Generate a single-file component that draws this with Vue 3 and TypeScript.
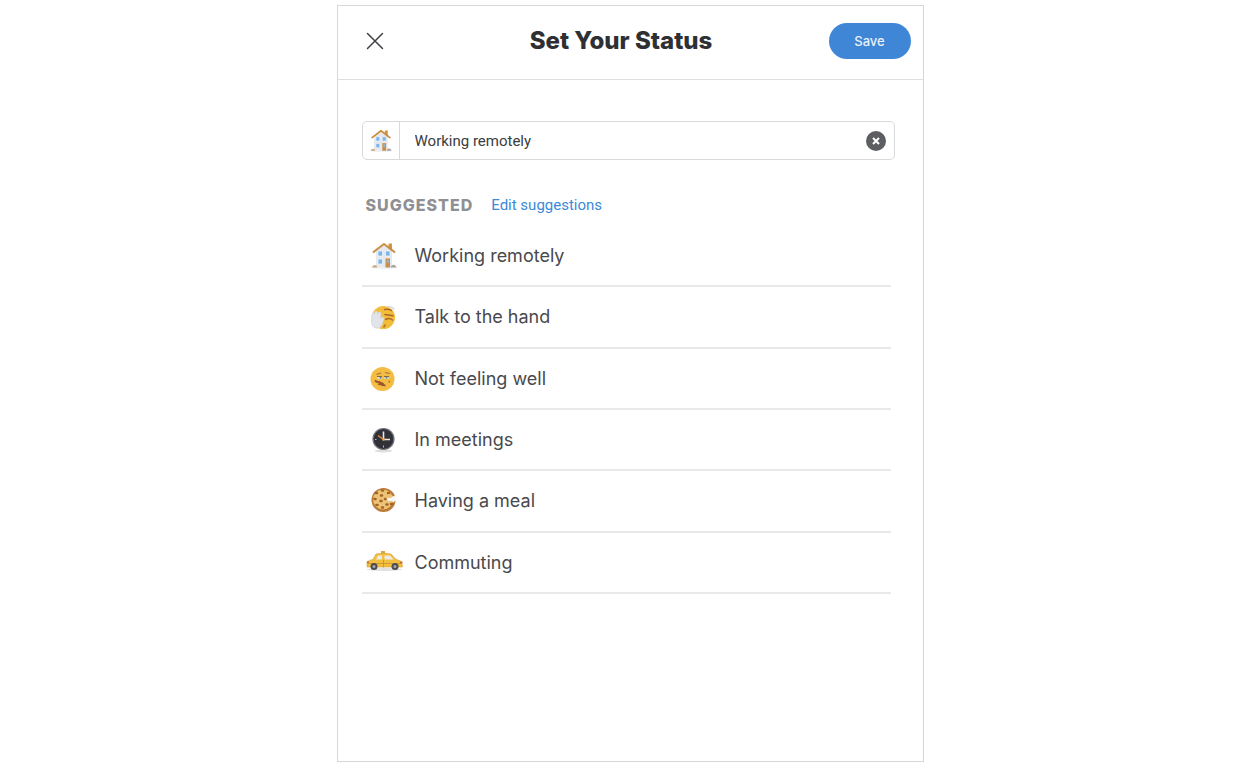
<script setup lang="ts">
import { ref } from 'vue'

type Icon = 'house' | 'hand' | 'woozy' | 'clock' | 'cookie' | 'taxi'
interface Suggestion { icon: Icon; label: string }

const suggestions: Suggestion[] = [
  { icon: 'house', label: 'Working remotely' },
  { icon: 'hand', label: 'Talk to the hand' },
  { icon: 'woozy', label: 'Not feeling well' },
  { icon: 'clock', label: 'In meetings' },
  { icon: 'cookie', label: 'Having a meal' },
  { icon: 'taxi', label: 'Commuting' },
]
const status = ref('Working remotely')
</script>

<template>
  <svg class="defs" aria-hidden="true">
    <symbol id="house" viewBox="0 0 40 28">
      <ellipse cx="20" cy="25.500" rx="13" ry="1.500" fill="#eef0f2" />
      <path d="M12 9 20 3l8 6v16H12z" fill="#e6e8ed" />
      <path d="M24.500 1.500h3.500v8l-3.500-3z" fill="#d3963f" />
      <path d="M9.500 10 20 2l10.500 8" fill="none" stroke="#c98d3d" stroke-width="2" stroke-linecap="round" stroke-linejoin="round" />
      <path d="M14 9h4.500v5H14zM21.500 9H26v5h-4.500zM14 17h4.500v5H14z" fill="#79b5ea" stroke="#f6f8fa" stroke-width=".7" />
      <path d="M21.500 16.500h4.500v9h-4.500z" fill="#c68f4b" />
      <path d="M22.800 18h2v3h-2z" fill="#8dbadc" />
      <path d="M8 25.500q.5-2.500 3-2.500 2 .3 2.200 2.500z" fill="#caa677" />
      <path d="M26.500 25.500q.7-3 3-2.800 2.500.3 3 2.800z" fill="#a9a39f" />
    </symbol>
    <symbol id="hand" viewBox="0 0 40 28">
      <circle cx="19.500" cy="14.500" r="11.500" fill="#f3bd3c" />
      <path d="M20.500 6.500q4-1 7 1M21 11.500l8 1.200M21.500 16.500q4-2 7 .5" fill="none" stroke="#a9672d" stroke-width="1.500" stroke-linecap="round" />
      <path d="M23 3.500q5 0 7.500 3" fill="none" stroke="#d9dadd" stroke-width="1.500" />
      <path d="m19.500 24.500 2-3" fill="none" stroke="#b87830" stroke-width="1.600" />
      <path d="M7.500 16q0-5 1.500-6 1.400-.2 1.500 1l.3-2q1.600-1.500 2.600.3l.5 2q.5-3 2-2.500 1.200.5 1 3l-.2 4q1.500-2.500 3-1.500 1 1-.5 4-1.500 5-3.500 6.500-4 1.500-7-1.500-1.500-3-1.200-7.300z" fill="#e2e4e9" stroke="#cfd2d8" stroke-width=".7" />
    </symbol>
    <symbol id="woozy" viewBox="0 0 40 28">
      <circle cx="18.500" cy="15" r="12" fill="#f2bd42" />
      <path d="M12.500 10.500 17 9M21 8.500l5 1" fill="none" stroke="#a87331" stroke-width="1.200" />
      <ellipse cx="15.500" cy="13.500" rx="2.500" ry="1.500" fill="#dce3e8" />
      <ellipse cx="22.500" cy="13.500" rx="2.500" ry="1.500" fill="#dce3e8" />
      <path d="M13 12.500h5M20 12.500h5" stroke="#94642d" />
      <circle cx="16.500" cy="13.800" r="1" fill="#5988a2" /><circle cx="22.500" cy="13.800" r="1" fill="#5988a2" />
      <path d="M11 16.500q2 2 4.500 1.500 1 1.500 3 1.500 1 2 3 2.200M14 20.500q2-1 5 1" fill="none" stroke="#9c542a" stroke-width="1.800" />
      <path d="m24 17.500 2-.5-1 2" fill="none" stroke="#c57b35" />
    </symbol>
    <symbol id="clock" viewBox="0 0 40 28">
      <ellipse cx="19.500" cy="25" rx="9" ry="1.500" fill="#dddede" />
      <circle cx="19.500" cy="13" r="10.500" fill="#303238" stroke="#73757b" stroke-width="1.200" />
      <path d="M19.500 5.500v8h6.500" fill="none" stroke="#e8e8e9" stroke-width="1.600" />
      <path d="m14 9.500 5.500 4" stroke="#e8883a" stroke-width="1.400" />
      <path d="M19.500 19.500v2M11 13.500h1.500" stroke="#b8b9bc" />
      <circle cx="19.500" cy="13.500" r="1.300" fill="#e8a04b" />
    </symbol>
    <symbol id="cookie" viewBox="0 0 40 28">
      <circle cx="19.500" cy="13" r="12" fill="#b97b36" />
      <circle cx="19" cy="12.500" r="10" fill="#edc477" />
      <path d="M12 6h1M18 3.500h1M24 6h1M17 8.500h1M10.500 12h1M16.500 14h1M12.500 18h1M21 12h.5M22.500 17.500h1M18 20.500h1M27 17h1" fill="none" stroke="#a56526" stroke-width="2.600" stroke-linecap="round" />
      <path d="M32 9.500q-3-1.500-5 1.500h-4l1 3h4l1 1.500 3-2z" fill="#f8f8f7" />
    </symbol>
    <symbol id="taxi" viewBox="0 0 40 28">
      <ellipse cx="20.500" cy="21.500" rx="18" ry="1.500" fill="#e1e1e2" />
      <path d="M17 3h4v3h-4z" fill="#dca93f" />
      <path d="M3 19v-5q2-2 6-2.500l3-5.500q8-1.500 15 0l4.500 5 6 2.500 1 5.500z" fill="#f2bf3f" stroke="#d49b2c" stroke-width=".6" />
      <path d="m12 11.500 2-4h4v4zM20.500 7.500H26l3.500 4h-9z" fill="#e9ece8" />
      <path d="M3.500 15.500h34M19.500 12v7.500" stroke="#ca8e2c" stroke-width=".8" />
      <circle cx="10" cy="18.500" r="3.500" fill="#4b4d52" /><circle cx="31" cy="18.500" r="3.500" fill="#4b4d52" />
      <circle cx="10" cy="18.500" r="1.500" fill="#a5a7aa" /><circle cx="31" cy="18.500" r="1.500" fill="#a5a7aa" />
      <path d="M3 14h2M36 14.500h2.500" stroke="#bd693b" stroke-width="1.500" />
    </symbol>
  </svg>
  <main class="page">
    <section class="panel" aria-labelledby="title">
      <header class="header">
        <button class="close" type="button" aria-label="Close">
          <svg width="18" height="18" viewBox="0 0 18 18"><path d="m1.500 1.500 15 15m0-15-15 15" fill="none" stroke="#3f4043" stroke-width="1.500" stroke-linecap="round" /></svg>
        </button>
        <h1 id="title">Set Your Status</h1>
        <button class="save" type="button">Save</button>
      </header>
      <div class="body">
        <div class="field">
          <button class="emoji" type="button" aria-label="Choose emoji"><svg width="34" height="24"><use href="#house" /></svg></button>
          <input v-model="status" type="text" aria-label="Status">
          <button class="clear" type="button" aria-label="Clear status" @click="status = ''">
            <svg width="20" height="20" viewBox="0 0 20 20"><circle cx="10" cy="10" r="10" fill="#5d5e62" /><path d="m7 7 6 6m0-6-6 6" stroke="#fff" stroke-width="2" /></svg>
          </button>
        </div>
        <div class="heading">
          <h2>SUGGESTED</h2>
          <a href="#edit">Edit suggestions</a>
        </div>
        <ul class="list">
          <li v-for="item in suggestions" :key="item.label">
            <button class="row" type="button" @click="status = item.label">
              <svg width="40" height="28" aria-hidden="true"><use :href="'#' + item.icon" /></svg>
              <span>{{ item.label }}</span>
            </button>
          </li>
        </ul>
      </div>
    </section>
  </main>
</template>

<style>
body { margin: 0; background: #fff; }
</style>

<style scoped>
.defs { position: absolute; width: 0; height: 0; }
.page {
  box-sizing: border-box;
  display: flex;
  justify-content: center;
  min-height: 100vh;
  padding: 5px 0 6px 21px;
  font-family: Inter, "Liberation Sans", sans-serif;
}
.panel {
  box-sizing: border-box;
  width: 100%;
  max-width: 587px;
  border: 1px solid #d6d7d9;
}
button { padding: 0; border: 0; background: none; font-family: inherit; cursor: pointer; }
svg { display: block; flex: none; }
.header {
  display: grid;
  grid-template-columns: 56px 1fr 82px;
  align-items: center;
  height: 70px;
  padding: 0 12px 3px 20px;
  border-bottom: 1px solid #dedfe1;
}
.close { justify-self: start; padding: 8px; }
h1 { margin: 0; color: #2f3034; font-size: 24px; line-height: 30px; font-weight: 800; text-align: center; }
.save { height: 36px; border-radius: 18px; background: #3f86d6; color: #e8f1fb; font-size: 13px; font-weight: 500; }
.body { padding: 41px 28px 40px 24px; }
.field {
  display: flex;
  align-items: center;
  height: 37px;
  border: 1px solid #d8d9dc;
  border-radius: 5px;
}
.emoji { display: flex; align-items: center; justify-content: center; width: 37px; height: 100%; border-right: 1px solid #d8d9dc; }
input {
  flex: 1;
  min-width: 0;
  padding: 0 15px;
  border: 0;
  outline: 0;
  background: none;
  color: #3b3c40;
  font-family: Roboto, sans-serif;
  font-size: 15px;
  line-height: 24px;
}
.clear { margin-right: 8px; }
.heading { display: flex; align-items: center; gap: 18px; margin: 33px 4px 9px; height: 24px; }
h2 { margin: 0; color: #8f9093; font-size: 16px; font-weight: 800; letter-spacing: 1px; }
a { color: #3b8ad8; font-family: Roboto, sans-serif; font-size: 15px; text-decoration: none; }
.list { display: grid; grid-auto-rows: 1fr; min-height: 368px; margin: 0 4px 0 0; padding: 0; list-style: none; }
li { border-bottom: 2px solid #e9e9ea; }
.row { display: flex; align-items: center; gap: 11px; width: 100%; height: 100%; padding-left: 2px; color: #48494d; font-size: 18px; text-align: left; }
</style>
